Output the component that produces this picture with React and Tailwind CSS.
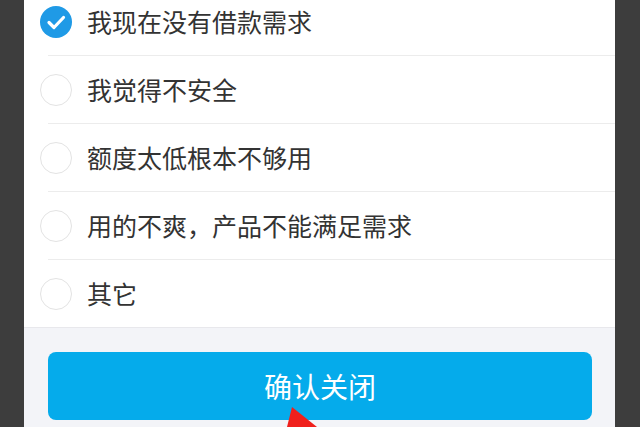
import React, { useState } from 'react';

const reasons = [
  '我现在没有借款需求',
  '我觉得不安全',
  '额度太低根本不够用',
  '用的不爽，产品不能满足需求',
  '其它',
];

function Radio({ checked }) {
  if (checked) {
    return (
      <svg width="32" height="32" viewBox="0 0 32 32" className="shrink-0">
        <circle cx="16" cy="16" r="16" fill="#1f9ae6" />
        <path d="M9 16.5 L14 21.5 L23.5 11.5" fill="none" stroke="#fff" strokeWidth="3.2" strokeLinecap="round" strokeLinejoin="round" />
      </svg>
    );
  }
  return <div className="w-[32px] h-[32px] shrink-0 rounded-full border border-[#e3e3e3] bg-white" />;
}

export default function App() {
  const [selected, setSelected] = useState(0);

  return (
    <div
      className="relative w-[640px] h-[427px] overflow-hidden bg-[#3d3d3d]"
      style={{ fontFamily: '"Noto Sans CJK SC", "Noto Sans", sans-serif' }}
    >
      <div className="ml-[24px] w-[591px] h-full bg-white flex flex-col">
        <div className="-mt-[12px]">
          {reasons.map((r, i) => (
            <div key={i}>
              <div
                className="flex items-center gap-[15px] h-[67px] pl-[16px] cursor-pointer"
                onClick={() => setSelected(i)}
              >
                <Radio checked={selected === i} />
                <span className="text-[25px] leading-none text-[#333333]">{r}</span>
              </div>
              {i < reasons.length - 1 && <div className="ml-[24px] h-px bg-[#ececec]" />}
            </div>
          ))}
        </div>
        <div className="flex-1 bg-[#f3f4f8] border-t border-[#e8e8ec] pt-[24px] pl-[24px]">
          <button className="w-[544px] h-[68px] rounded-[8px] bg-[#05abeb] text-white text-[28px] leading-none">
            确认关闭
          </button>
        </div>
      </div>

      {/* red annotation arrow */}
      <svg className="absolute left-0 top-0 pointer-events-none" width="640" height="427">
        <polygon points="292,407 287,427 317,427" fill="#f0201c" />
      </svg>
    </div>
  );
}
